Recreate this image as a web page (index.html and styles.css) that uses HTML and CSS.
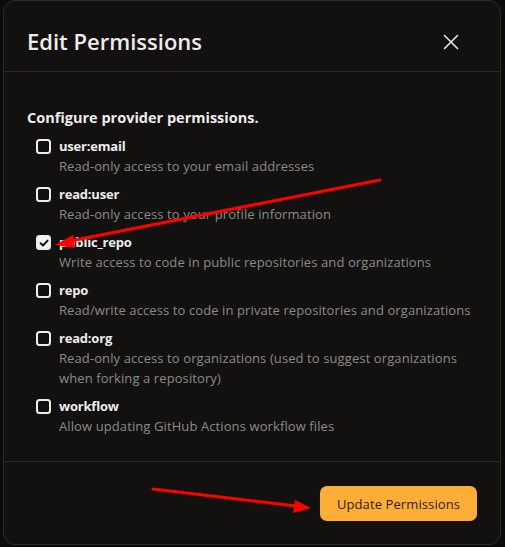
FILE: index.html
```html
<!DOCTYPE html>
<html>
<head>
<meta charset="utf-8">
<link rel="stylesheet" href="styles.css">
</head>
<body>
<div class="screen">
  <div class="modal">
    <div class="header">
      <h1 class="title">Edit Permissions</h1>
      <button class="close" aria-label="Close">
        <svg width="16" height="16" viewBox="0 0 16 16"><path d="M1.5 1.5 L14.5 14.5 M14.5 1.5 L1.5 14.5" stroke="#e6e6e6" stroke-width="1.6" fill="none" stroke-linecap="round"/></svg>
      </button>
    </div>
    <div class="body">
      <div class="subtitle">Configure provider permissions.</div>
      <ul class="list">
        <li class="item">
          <span class="box"></span>
          <div class="text"><div class="name">user:email</div><div class="desc">Read-only access to your email addresses</div></div>
        </li>
        <li class="item">
          <span class="box"></span>
          <div class="text"><div class="name">read:user</div><div class="desc">Read-only access to your profile information</div></div>
        </li>
        <li class="item">
          <span class="box checked"><svg width="10" height="10" viewBox="0 0 10 10"><path d="M1.6 5.2 L4 7.5 L8.6 2.6" stroke="#111" stroke-width="1.9" fill="none" stroke-linecap="round" stroke-linejoin="round"/></svg></span>
          <div class="text"><div class="name">public_repo</div><div class="desc">Write access to code in public repositories and organizations</div></div>
        </li>
        <li class="item">
          <span class="box"></span>
          <div class="text"><div class="name">repo</div><div class="desc">Read/write access to code in private repositories and organizations</div></div>
        </li>
        <li class="item">
          <span class="box"></span>
          <div class="text"><div class="name">read:org</div><div class="desc">Read-only access to organizations (used to suggest organizations when forking a repository)</div></div>
        </li>
        <li class="item">
          <span class="box"></span>
          <div class="text"><div class="name">workflow</div><div class="desc">Allow updating GitHub Actions workflow files</div></div>
        </li>
      </ul>
    </div>
    <div class="footer">
      <button class="primary">Update Permissions</button>
    </div>
  </div>
  <svg class="annot" width="505" height="547" viewBox="0 0 505 547">
    <path d="M380 180 L70 241" stroke="#ff0000" stroke-width="3" fill="none" stroke-linecap="round"/>
    <path d="M55 245 L73 235 L75 248 Z" fill="#ff0000"/>
    <path d="M153 489 L296 506" stroke="#ff0000" stroke-width="3" fill="none" stroke-linecap="round"/>
    <path d="M311 508 L295 500 L293 513 Z" fill="#ff0000"/>
  </svg>
</div>
</body>
</html>
```

FILE: styles.css
```css
html, body {
  margin: 0;
  padding: 0;
  background: #0b0b0b;
}
.screen {
  position: relative;
  width: 505px;
  height: 547px;
  overflow: hidden;
  font-family: "Open Sans", "Noto Sans", sans-serif;
}
.modal {
  margin-left: 3px;
  width: 498px;
  height: 545px;
  box-sizing: border-box;
  background: #12110f;
  border: 1px solid #2c2b29;
  border-radius: 12px;
  display: flex;
  flex-direction: column;
}
.header {
  height: 71px;
  border-bottom: 1px solid #2a2927;
  display: flex;
  align-items: center;
  justify-content: space-between;
  padding: 10px 41px 0 23px;
  box-sizing: border-box;
}
.title {
  margin: 0;
  font-size: 22px;
  font-weight: 600;
  color: #ececec;
  letter-spacing: 0;
  line-height: 30px;
}
.close {
  background: none;
  border: 0;
  padding: 0;
  width: 16px;
  height: 16px;
  display: flex;
  margin-top: 2px;
}
.body {
  flex: 1;
  padding: 35px 23px 0 23px;
}
.subtitle {
  font-size: 14.5px;
  font-weight: 700;
  color: #ededed;
  line-height: 22px;
  letter-spacing: 0;
}
.list {
  list-style: none;
  margin: 7px 0 0 0;
  padding: 0 0 0 9px;
  display: flex;
  flex-direction: column;
  gap: 8px;
}
.item {
  display: flex;
  gap: 8px;
  align-items: flex-start;
}
.box {
  flex: none;
  width: 15px;
  height: 15px;
  margin-top: 3px;
  box-sizing: border-box;
  border: 2px solid #ececec;
  border-radius: 3.5px;
  display: flex;
  align-items: center;
  justify-content: center;
}
.box.checked {
  background: #f2f2f2;
}
.name {
  font-size: 13px;
  font-weight: 700;
  color: #ececec;
  line-height: 20px;
  letter-spacing: -0.2px;
}
.desc {
  font-size: 13px;
  color: #8b8a88;
  line-height: 20px;
  letter-spacing: 0.1px;
}
.footer {
  height: 83px;
  border-top: 1px solid #2a2927;
  display: flex;
  justify-content: flex-end;
  align-items: flex-start;
  padding: 24px 23px 0 0;
  box-sizing: border-box;
}
.primary {
  background: #feae36;
  border: 0;
  border-radius: 7px;
  height: 35px;
  width: 157px;
  font-family: "Open Sans", "Noto Sans", sans-serif;
  font-size: 13px;
  font-weight: 500;
  color: #2a2318;
  letter-spacing: 0.1px;
}
.annot {
  position: absolute;
  left: 0;
  top: 0;
  pointer-events: none;
}
```
